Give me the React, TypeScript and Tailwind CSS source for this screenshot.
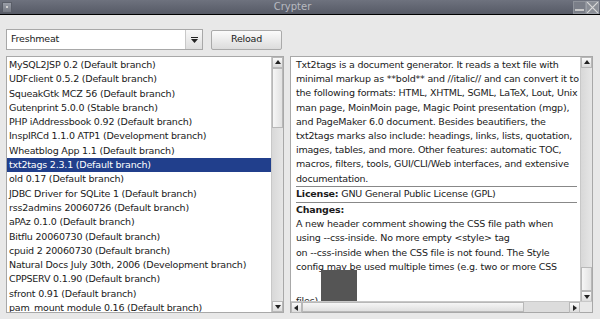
import React from "react";

const items = [
  "MySQL2JSP 0.2 (Default branch)",
  "UDFclient 0.5.2 (Default branch)",
  "SqueakGtk MCZ 56 (Default branch)",
  "Gutenprint 5.0.0 (Stable branch)",
  "PHP iAddressbook 0.92 (Default branch)",
  "InspIRCd 1.1.0 ATP1 (Development branch)",
  "Wheatblog App 1.1 (Default branch)",
  "txt2tags 2.3.1 (Default branch)",
  "old 0.17 (Default branch)",
  "JDBC Driver for SQLite 1 (Default branch)",
  "rss2admins 20060726 (Default branch)",
  "aPAz 0.1.0 (Default branch)",
  "Bitflu 20060730 (Default branch)",
  "cpuid 2 20060730 (Default branch)",
  "Natural Docs July 30th, 2006 (Development branch)",
  "CPPSERV 0.1.90 (Default branch)",
  "sfront 0.91 (Default branch)",
  "pam_mount module 0.16 (Default branch)",
];

const description = [
  "Txt2tags is a document generator. It reads a text file with",
  "minimal markup as **bold** and //italic// and can convert it to",
  "the following formats: HTML, XHTML, SGML, LaTeX, Lout, Unix",
  "man page, MoinMoin page, Magic Point presentation (mgp),",
  "and PageMaker 6.0 document. Besides beautifiers, the",
  "txt2tags marks also include: headings, links, lists, quotation,",
  "images, tables, and more. Other features: automatic TOC,",
  "macros, filters, tools, GUI/CLI/Web interfaces, and extensive",
  "documentation.",
];

const changes = [
  "A new header comment showing the CSS file path when",
  "using --css-inside. No more empty <style> tag",
  "on --css-inside when the CSS file is not found. The Style",
  "config may be used multiple times (e.g. two or more CSS",
];

const Arrow = ({ dir }: { dir: "up" | "down" | "left" | "right" }) => {
  const pts = {
    up: "1,5 4,1 7,5",
    down: "1,2 4,6 7,2",
    left: "5,1 1,4 5,7",
    right: "2,1 6,4 2,7",
  }[dir];
  return (
    <svg width="8" height="8" viewBox="0 0 8 8">
      <polygon points={pts} fill="#222" />
    </svg>
  );
};

const ArrowBtn = ({ dir }: { dir: "up" | "down" | "left" | "right" }) => (
  <div className="w-[11px] h-[11px] flex items-center justify-center bg-gradient-to-b from-[#fafafa] to-[#dcdcdc] border border-[#b8b8b8] shrink-0">
    <Arrow dir={dir} />
  </div>
);

const VScroll = ({ thumbTop, thumbH }: { thumbTop: number; thumbH: number }) => (
  <div className="w-[12px] h-full flex flex-col bg-[#e4e4e4] border-l border-[#c8c8c8]">
    <ArrowBtn dir="up" />
    <div className="flex-1 bg-gradient-to-r from-[#d8d8d8] to-[#e6e6e6] flex flex-col">
      <div style={{ height: thumbTop }} />
      <div
        className="bg-gradient-to-r from-[#f6f6f6] to-[#e2e2e2] border border-[#b8b8b8]"
        style={{ height: thumbH }}
      />
    </div>
    <ArrowBtn dir="down" />
  </div>
);

export default function App() {
  return (
    <div
      className="w-[600px] h-[319px] bg-[#e8e8e8] flex flex-col overflow-hidden text-[9.5px] tracking-[-0.2px] text-[#1a1a1a]"
      style={{ fontFamily: '"DejaVu Sans", sans-serif' }}
    >
      {/* title bar */}
      <div className="h-[15px] shrink-0 bg-gradient-to-b from-[#6e727e] to-[#565a66] border-b border-black flex items-center">
        <div className="w-[10px] h-[11px] ml-[2px] bg-gradient-to-b from-[#9a9ea8] to-[#747882] border border-[#5a5e68] flex items-center justify-center">
          <div className="w-[2px] h-[2px] bg-[#d0d0d0]" />
        </div>
        <div className="flex-1 text-center text-[#b8bac0] text-[10px] tracking-normal leading-none">Crypter</div>
        <div className="w-[13px] h-[13px] bg-[#7a7e88] border border-[#8e929a] flex items-end justify-center pb-[2px]">
          <div className="w-[9px] h-[2px] bg-[#c8c8c8]" />
        </div>
        <div className="w-[13px] h-[13px] bg-[#8a8e96] border border-[#9a9ea6] mr-[1px] overflow-hidden">
          <svg width="11" height="11" viewBox="0 0 11 11">
            <path d="M0 0 L11 11 M11 0 L0 11" stroke="#d8d8d8" strokeWidth="1.2" />
          </svg>
        </div>
      </div>

      {/* toolbar */}
      <div className="flex items-center gap-[8px] pl-[6px] mt-[14px] h-[21px] shrink-0">
        <div className="w-[197px] h-[21px] bg-white border border-[#a8a8a8] flex">
          <div className="flex-1 pl-[4px] flex items-center">Freshmeat</div>
          <div className="w-[17px] border-l border-[#c8c8c8] bg-gradient-to-b from-[#f8f8f8] to-[#dedede] flex flex-col items-center justify-center gap-[1px]">
            <div className="w-[7px] h-[1px] bg-[#222]" />
            <svg width="7" height="4" viewBox="0 0 7 4">
              <polygon points="0,0 7,0 3.5,4" fill="#222" />
            </svg>
          </div>
        </div>
        <div className="w-[71px] h-[20px] rounded-[2px] border border-[#aaaaaa] bg-gradient-to-b from-[#fbfbfb] to-[#dcdcdc] flex items-center justify-center">
          Reload
        </div>
      </div>

      {/* panes */}
      <div className="flex mt-[6px] h-[257px] shrink-0 pl-[6px]">
        <div className="w-[278px] h-full border border-[#a8a8a8] bg-white flex">
          <div className="flex-1 overflow-hidden pt-[1px]">
            {items.map((it) => (
              <div
                key={it}
                className={
                  "h-[14.3px] leading-[14.3px] pl-[2px] whitespace-nowrap " +
                  (it.startsWith("txt2tags") ? "bg-[#213f8c] text-white" : "")
                }
              >
                {it}
              </div>
            ))}
          </div>
          <VScroll thumbTop={0} thumbH={60} />
        </div>

        <div className="w-[303px] h-full ml-[6px] border border-[#a8a8a8] bg-white flex flex-col">
          <div className="flex-1 flex min-h-0">
            <div className="flex-1 overflow-hidden pl-[5px] pr-[3px] pt-[1px] leading-[14.2px] whitespace-nowrap">
              {description.map((l) => (
                <div key={l}>{l}</div>
              ))}
              <div className="border-t border-[#888]">
                <b>License:</b> GNU General Public License (GPL)
              </div>
              <div className="border-t border-[#888] mt-[1px]">
                <b>Changes:</b>
              </div>
              {changes.map((l) => (
                <div key={l}>{l}</div>
              ))}
              <div className="-mt-[4px]">
                files)
                <span className="inline-block w-[36px] h-[34px] ml-[3px] bg-[#555555] align-baseline" />
              </div>
            </div>
            <VScroll thumbTop={199} thumbH={24} />
          </div>
          <div className="h-[11px] flex border-t border-[#c8c8c8] shrink-0">
            <ArrowBtn dir="left" />
            <div className="flex-1 bg-[#dcdcdc] flex">
              <div className="w-[222px] bg-gradient-to-b from-[#f6f6f6] to-[#e0e0e0] border border-[#b8b8b8]" />
            </div>
            <ArrowBtn dir="right" />
            <div className="w-[12px] bg-[#e8e8e8]" />
          </div>
        </div>
      </div>
    </div>
  );
}
